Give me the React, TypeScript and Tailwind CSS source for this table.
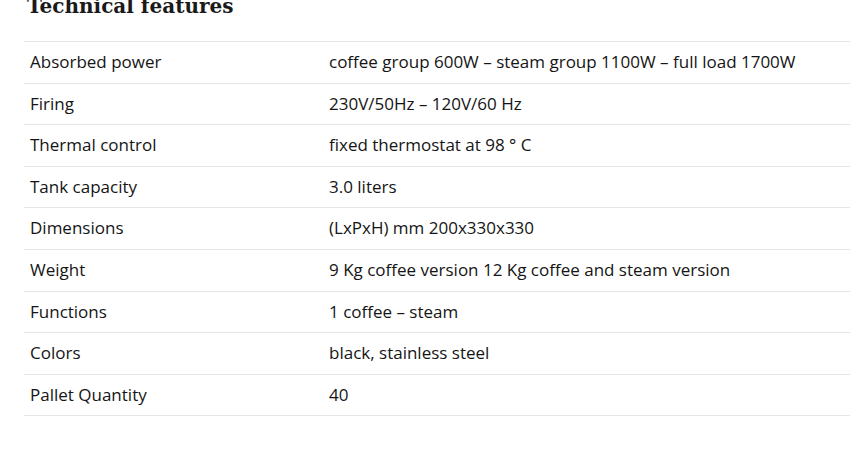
import React from "react";

const rows: [string, string][] = [
  ["Absorbed power", "coffee group 600W – steam group 1100W – full load 1700W"],
  ["Firing", "230V/50Hz – 120V/60 Hz"],
  ["Thermal control", "fixed thermostat at 98 ° C"],
  ["Tank capacity", "3.0 liters"],
  ["Dimensions", "(LxPxH) mm 200x330x330"],
  ["Weight", "9 Kg coffee version 12 Kg coffee and steam version"],
  ["Functions", "1 coffee – steam"],
  ["Colors", "black, stainless steel"],
  ["Pallet Quantity", "40"],
];

export default function App() {
  return (
    <div className="w-[850px] h-[460px] overflow-hidden bg-white">
      <div className="pl-[24px]">
        <h2
          className="mt-[-7px] ml-[3px] text-[20px] leading-[26px] font-bold text-[#1a1a1a]"
          style={{ fontFamily: '"DejaVu Serif", "Liberation Serif", serif' }}
        >
          Technical features
        </h2>
        <div
          className="mt-[22px] border-b-[1.5px] border-[#e6e6e6] text-[17px] text-[#151515]"
          style={{ fontFamily: '"Open Sans", sans-serif' }}
        >
          {rows.map(([k, v]) => (
            <div
              key={k}
              className="flex h-[41.6px] items-center pb-[1px] border-t-[1.5px] border-[#e6e6e6]"
            >
              <div className="w-[305px] pl-[6px]">{k}</div>
              <div>{v}</div>
            </div>
          ))}
        </div>
      </div>
    </div>
  );
}
